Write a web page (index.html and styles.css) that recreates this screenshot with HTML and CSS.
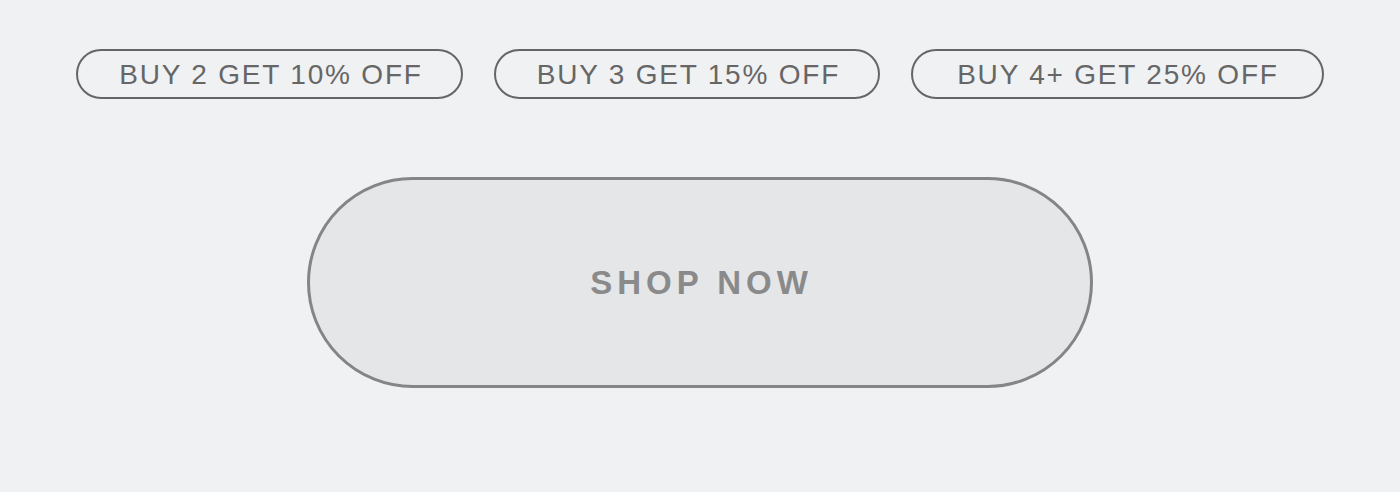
FILE: index.html
```html
<!DOCTYPE html>
<html lang="en">
<head>
    <meta charset="UTF-8">
    <meta name="viewport" content="width=device-width, initial-scale=1.0">
    <title>Bundle offer</title>
    <link rel="stylesheet" href="styles.css">
</head>
<body>
<div class="offer-wrap">
    <div class="deal-list">
        <span class="deal">BUY 2 GET 10% OFF</span>
        <span class="deal">BUY 3 GET 15% OFF</span>
        <span class="deal deal-wide">BUY 4+ GET 25% OFF</span>
    </div>

    <button type="button" class="shop-btn">SHOP NOW</button>
</div>
</body>
</html>
```

FILE: styles.css
```css
:root {
    --page-bg: #f0f1f3;
    --deal-color: #666666;
    --btn-border: #858585;
    --btn-text: #8a8a8a;
}

* {
    box-sizing: border-box;
}

body {
    margin: 0;
    background: var(--page-bg);
    font-family: 'Liberation Sans', Arial, sans-serif;
    min-height: 100vh;
}

.offer-wrap {
    display: flex;
    flex-direction: column;
    align-items: center;
    padding-top: 49px;
}

.deal-list {
    display: flex;
    justify-content: center;
    gap: 31px;
}

.deal {
    display: flex;
    align-items: center;
    height: 50px;
    padding: 1px 38px 0 41px;
    border: 2px solid var(--deal-color);
    border-radius: 25px;
    color: var(--deal-color);
    font-size: 28px;
    letter-spacing: 1.8px;
    white-space: nowrap;
}

.deal-wide {
    padding: 1px 43px 0 44px;
}

.shop-btn {
    margin-top: 78px;
    width: 786px;
    height: 211px;
    background: #e5e6e8;
    border: 3px solid var(--btn-border);
    border-radius: 106px;
    color: var(--btn-text);
    font-family: 'Liberation Sans', Arial, sans-serif;
    font-size: 33px;
    font-weight: bold;
    letter-spacing: 5px;
    padding: 0 0 0 3px;
    cursor: pointer;
}
```
